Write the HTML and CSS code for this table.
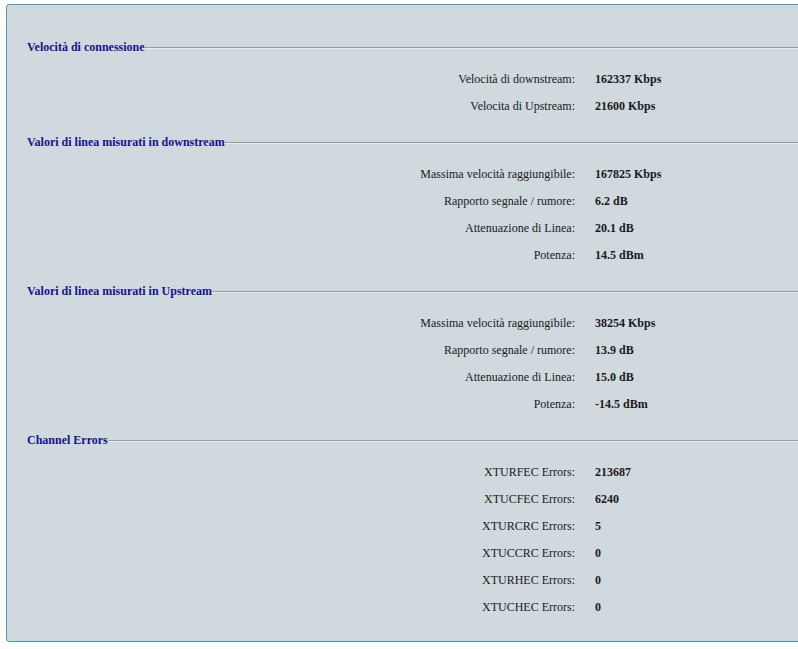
FILE: index.html
```html
<!DOCTYPE html>
<html>
<head>
<meta charset="utf-8">
<link rel="stylesheet" href="styles.css">
</head>
<body>
<div class="page">
  <div class="panel">
    <section class="section">
      <div class="heading"><span class="title">Velocità di connessione</span><span class="rule"></span></div>
      <div class="row"><span class="label">Velocità di downstream:</span><span class="value">162337 Kbps</span></div>
      <div class="row"><span class="label">Velocita di Upstream:</span><span class="value">21600 Kbps</span></div>
    </section>
    <section class="section">
      <div class="heading"><span class="title">Valori di linea misurati in downstream</span><span class="rule"></span></div>
      <div class="row"><span class="label">Massima velocità raggiungibile:</span><span class="value">167825 Kbps</span></div>
      <div class="row"><span class="label">Rapporto segnale / rumore:</span><span class="value">6.2 dB</span></div>
      <div class="row"><span class="label">Attenuazione di Linea:</span><span class="value">20.1 dB</span></div>
      <div class="row"><span class="label">Potenza:</span><span class="value">14.5 dBm</span></div>
    </section>
    <section class="section">
      <div class="heading"><span class="title">Valori di linea misurati in Upstream</span><span class="rule"></span></div>
      <div class="row"><span class="label">Massima velocità raggiungibile:</span><span class="value">38254 Kbps</span></div>
      <div class="row"><span class="label">Rapporto segnale / rumore:</span><span class="value">13.9 dB</span></div>
      <div class="row"><span class="label">Attenuazione di Linea:</span><span class="value">15.0 dB</span></div>
      <div class="row"><span class="label">Potenza:</span><span class="value">-14.5 dBm</span></div>
    </section>
    <section class="section">
      <div class="heading"><span class="title">Channel Errors</span><span class="rule"></span></div>
      <div class="row"><span class="label">XTURFEC Errors:</span><span class="value">213687</span></div>
      <div class="row"><span class="label">XTUCFEC Errors:</span><span class="value">6240</span></div>
      <div class="row"><span class="label">XTURCRC Errors:</span><span class="value">5</span></div>
      <div class="row"><span class="label">XTUCCRC Errors:</span><span class="value">0</span></div>
      <div class="row"><span class="label">XTURHEC Errors:</span><span class="value">0</span></div>
      <div class="row"><span class="label">XTUCHEC Errors:</span><span class="value">0</span></div>
    </section>
  </div>
</div>
</body>
</html>
```

FILE: styles.css
```css
html, body {
  margin: 0;
  padding: 0;
  background: #ffffff;
  overflow: hidden;
}
body {
  font-family: "Liberation Serif", "Times New Roman", serif;
  font-size: 12px;
  color: #1a1a1a;
}
.page {
  padding: 4px 0 0 6px;
  width: 798px;
  overflow: hidden;
}
.panel {
  width: 830px;
  background: #cfd9de;
  border: 1px solid #4a9bb0;
  border-radius: 3px;
  padding: 32px 0 20px 20px;
  box-sizing: border-box;
  display: flex;
  flex-direction: column;
  gap: 12px;
}
.section {
  display: flex;
  flex-direction: column;
}
.heading {
  display: flex;
  align-items: center;
  height: 20px;
  margin-bottom: 9px;
}
.title {
  font-weight: bold;
  color: #14148c;
  white-space: nowrap;
}
.rule {
  flex: 1;
  height: 0;
  border-top: 1px solid #9a9a9a;
  border-bottom: 1px solid #e8eef0;
  margin-top: 2px;
}
.row {
  display: grid;
  grid-template-columns: 548px auto;
  column-gap: 20px;
  height: 27px;
  line-height: 27px;
}
.label {
  text-align: right;
  color: #1a1a1a;
}
.value {
  font-weight: bold;
  color: #1a1a1a;
}
```
